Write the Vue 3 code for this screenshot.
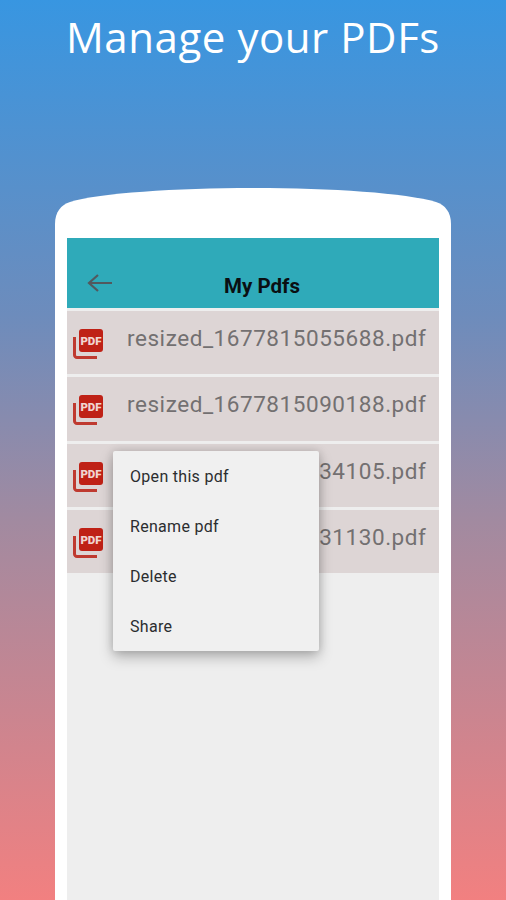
<script setup>
const files = [
  { id: 1, name: 'resized_1677815055688.pdf' },
  { id: 2, name: 'resized_1677815090188.pdf' },
  { id: 3, name: 'resized_1677815134105.pdf' },
  { id: 4, name: 'resized_1677815231130.pdf' },
]
const menu = ['Open this pdf', 'Rename pdf', 'Delete', 'Share']
</script>

<template>
  <div class="page">
    <h1 class="title">Manage your PDFs</h1>
    <div class="phone">
      <svg class="phone-top" width="396" height="50" viewBox="0 0 396 50">
        <path d="M0 50V36C0 24 6 17 15 14C45 5 120 0 198 0C276 0 351 5 381 14C390 17 396 24 396 36V50Z" fill="#fff" />
      </svg>
      <div class="phone-body">
        <div class="screen">
          <header class="toolbar">
            <svg class="back" width="28" height="20" viewBox="0 0 28 20">
              <path d="M26 10H3M12 2L3 10L12 18" fill="none" stroke="#52595e" stroke-width="2.200" />
            </svg>
            <span class="toolbar-title">My Pdfs</span>
          </header>
          <ul class="list">
            <li v-for="file in files" :key="file.id" class="row">
              <svg class="pdf" width="32" height="32" viewBox="0 0 32 32">
                <path d="M2.500 8V26A2.500 2.500 0 0 0 5 28.500H25" fill="none" stroke="#bf3a30" stroke-width="3" />
                <rect x="7" y="0" width="24" height="23" rx="3" fill="#bf2116" />
                <text x="19" y="15.500" class="pdf-text" text-anchor="middle">PDF</text>
              </svg>
              <span class="name">{{ file.name }}</span>
            </li>
          </ul>
          <div class="menu">
            <div v-for="item in menu" :key="item" class="menu-item">{{ item }}</div>
          </div>
        </div>
      </div>
    </div>
  </div>
</template>

<style scoped>
.page {
  position: relative;
  width: 506px;
  height: 900px;
  overflow: hidden;
  background: linear-gradient(180deg, #3896e1 0%, #6d8cbc 35%, #a28aa0 58%, #f28080 100%);
  font-family: Roboto, "Liberation Sans", sans-serif;
}
.title {
  margin: 0;
  height: 188px;
  padding-top: 8px;
  box-sizing: border-box;
  text-align: center;
  font-family: "Open Sans", "Noto Sans", sans-serif;
  font-size: 42px;
  line-height: 58px;
  font-weight: 400;
  letter-spacing: 0.550px;
  color: #fff;
}
.phone {
  width: 396px;
  margin-left: 55px;
  height: 712px;
  display: flex;
  flex-direction: column;
}
.phone-top {
  display: block;
  flex: none;
}
.phone-body {
  flex: 1;
  background: #fff;
  padding: 0 12px;
}
.screen {
  position: relative;
  height: 100%;
  background: #eeeeee;
}
.toolbar {
  position: relative;
  height: 70px;
  background: #2faab9;
  display: flex;
  align-items: flex-end;
  justify-content: center;
  padding: 0 0 10px 18px;
  box-sizing: border-box;
}
.back {
  position: absolute;
  left: 19px;
  top: 35px;
}
.toolbar-title {
  font-size: 20.500px;
  line-height: 24px;
  font-weight: 700;
  color: #0a0f12;
}
.list {
  list-style: none;
  margin: 0;
  padding: 3px 0 0;
  display: flex;
  flex-direction: column;
  gap: 3px;
}
.row {
  height: 63.250px;
  background: #ddd5d5;
  display: flex;
  align-items: flex-start;
  position: relative;
  padding-left: 60px;
  box-sizing: border-box;
}
.pdf {
  position: absolute;
  left: 5px;
  top: 18px;
}
.pdf-text {
  font-family: Roboto, sans-serif;
  font-size: 11.500px;
  font-weight: 900;
  fill: #f0d4d0;
}
.name {
  font-size: 22.500px;
  line-height: 28px;
  margin-top: 13px;
  letter-spacing: 0.550px;
  color: #737071;
  white-space: nowrap;
}
.menu {
  position: absolute;
  left: 46px;
  top: 213px;
  width: 206px;
  height: 200px;
  background: #f0f0f0;
  border-radius: 2px;
  box-shadow: 0 6px 14px rgba(0, 0, 0, 0.26), 0 0 8px rgba(0, 0, 0, 0.14);
  display: flex;
  flex-direction: column;
}
.menu-item {
  flex: 1;
  display: flex;
  align-items: center;
  padding: 1px 0 0 17px;
  font-size: 16px;
  letter-spacing: 0.300px;
  color: #2b2d2f;
}
</style>

<style>
html, body { margin: 0; padding: 0; }
</style>
